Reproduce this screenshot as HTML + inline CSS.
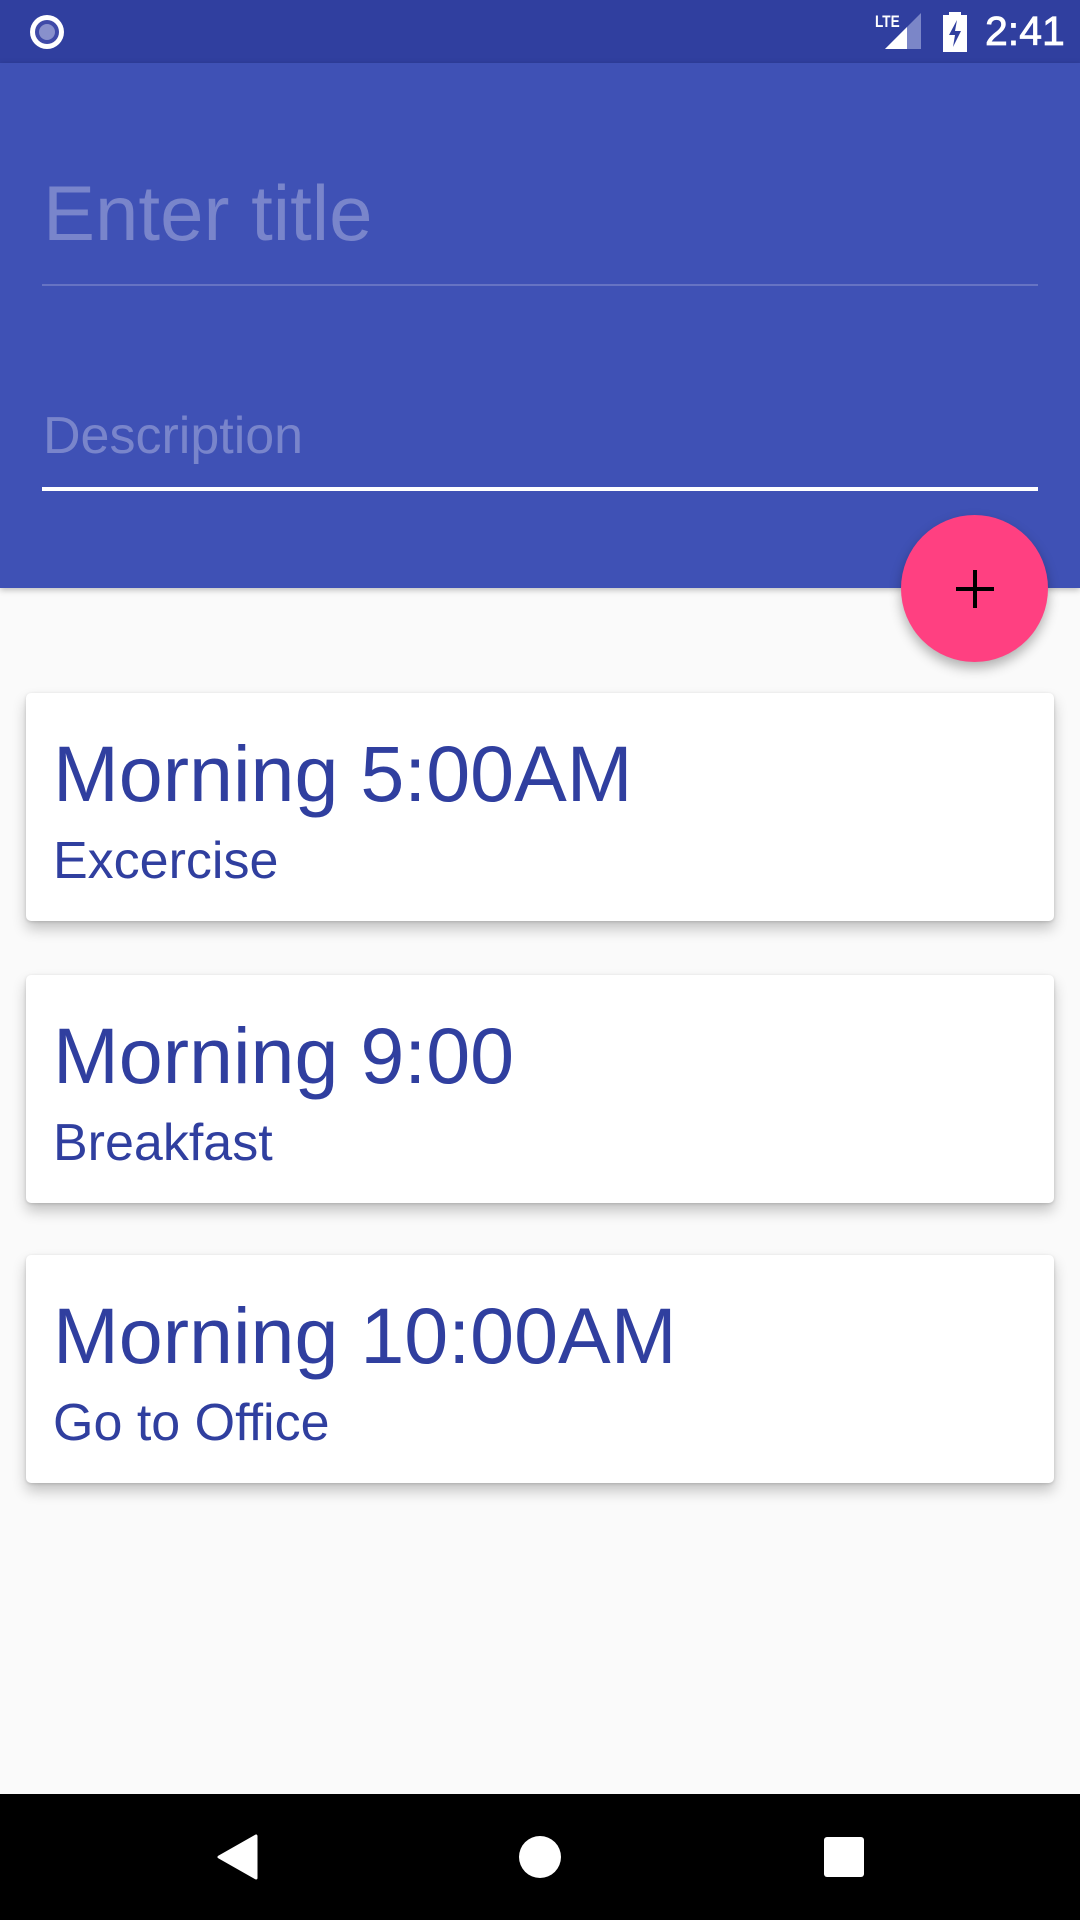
<!DOCTYPE html>
<html><head><meta charset="utf-8"><style>
*{margin:0;padding:0;box-sizing:border-box}
body{width:1080px;height:1920px;overflow:hidden;background:#fafafa;font-family:"Liberation Sans",sans-serif;position:relative}
.abs{position:absolute}
.status{left:0;top:0;width:1080px;height:63px;background:#303F9F}
.header{left:0;top:63px;width:1080px;height:525px;background:#3F51B5;box-shadow:0 2px 6px rgba(0,0,0,.25)}
.t{white-space:nowrap;line-height:1}
.card{left:26px;width:1028px;height:228px;background:#fff;border-radius:5px;box-shadow:0 8px 14px rgba(0,0,0,.22),0 1px 3px rgba(0,0,0,.15)}
.ct{color:#303F9F;left:27px;font-size:79px}
.cs{color:#303F9F;left:27px;font-size:52px}
.nav{left:0;top:1794px;width:1080px;height:126px;background:#000}
</style></head><body>
<div class="abs status"></div>
<svg class="abs" style="left:28px;top:13px" width="38" height="38" viewBox="0 0 38 38"><circle cx="19" cy="19" r="17" fill="#fff"/><circle cx="19" cy="19" r="12" fill="#3F4aa8"/><circle cx="19" cy="19" r="8" fill="#8890cc"/></svg>
<div class="abs t" style="left:875px;top:13px;color:#fff;font-size:17px;font-weight:bold;transform:scaleX(.8);transform-origin:left">LTE</div>
<svg class="abs" style="left:884px;top:12px" width="38" height="38" viewBox="0 0 38 38"><polygon points="37,1 37,37 1,37" fill="#7b86c8"/><polygon points="23,15 23,37 1,37" fill="#fff"/></svg>
<svg class="abs" style="left:942px;top:12px" width="26" height="40" viewBox="0 0 26 40"><rect x="7" y="0" width="12" height="4" fill="#fff"/><rect x="1" y="3" width="24" height="37" fill="#fff"/><path d="M15 8 L7 23 H13 L11 35 L19 19 H13 Z" fill="#303F9F"/></svg>
<div class="abs t" style="left:985px;top:11px;color:#fff;font-size:41px;-webkit-text-stroke:0.8px #fff">2:41</div>
<div class="abs header"></div>
<div class="abs t" style="left:43px;top:174px;color:#7985cb;font-size:78px">Enter title</div>
<div class="abs" style="left:42px;top:284px;width:996px;height:2px;background:#6673c3"></div>
<div class="abs t" style="left:43px;top:410px;color:#7985cb;font-size:52px">Description</div>
<div class="abs" style="left:42px;top:487px;width:996px;height:4px;background:#fff"></div>
<div class="abs" style="left:901px;top:515px;width:147px;height:147px;border-radius:50%;background:#FF4081;box-shadow:0 6px 12px rgba(0,0,0,.3)"></div>
<div class="abs" style="left:956px;top:587px;width:38px;height:4px;background:#000"></div>
<div class="abs" style="left:973px;top:570px;width:4px;height:38px;background:#000"></div>

<div class="abs card" style="top:693px"><div class="abs t ct" style="top:41px">Morning 5:00AM</div><div class="abs t cs" style="top:142px">Excercise</div></div>
<div class="abs card" style="top:975px"><div class="abs t ct" style="top:41px">Morning 9:00</div><div class="abs t cs" style="top:142px">Breakfast</div></div>
<div class="abs card" style="top:1255px"><div class="abs t ct" style="top:41px">Morning 10:00AM</div><div class="abs t cs" style="top:142px">Go to Office</div></div>

<div class="abs nav"></div>
<svg class="abs" style="left:216px;top:1834px" width="42" height="46" viewBox="0 0 42 46"><path d="M40 2 L40 44 L3 23 Z" fill="#fff" stroke="#fff" stroke-width="3" stroke-linejoin="round"/></svg>
<div class="abs" style="left:519px;top:1836px;width:42px;height:42px;border-radius:50%;background:#fff"></div>
<div class="abs" style="left:824px;top:1837px;width:40px;height:40px;border-radius:3px;background:#fff"></div>
</body></html>
